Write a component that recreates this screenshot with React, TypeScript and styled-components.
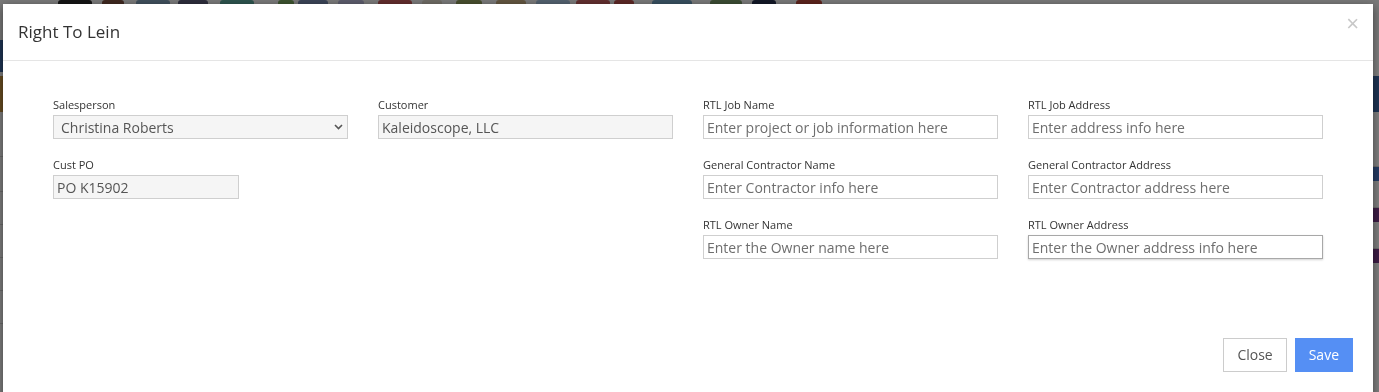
import React from 'react';
import styled, { createGlobalStyle } from 'styled-components';

const GlobalStyle = createGlobalStyle`
  html, body {
    margin: 0;
    padding: 0;
    height: 100%;
    overflow: hidden;
    font-family: "Open Sans", "Liberation Sans", sans-serif;
  }
`;

/* ---------- page that sits under the dialog ---------- */

const Page = styled.div`
  height: 100vh;
  background: #fff;
  display: flex;
  flex-direction: column;
`;

const ThumbStrip = styled.div`
  display: flex;
  align-items: flex-start;
  height: 40px;
  padding-left: 58px;
  background: #f2f2f2;
`;

const Thumb = styled.div<{ $w: number; $c: string; $gap: number }>`
  width: ${(p) => p.$w}px;
  height: 36px;
  margin-left: ${(p) => p.$gap}px;
  background: ${(p) => p.$c};
  border-radius: 3px;
`;

const Board = styled.div`
  flex: 1;
  display: flex;
  justify-content: space-between;
`;

const Rail = styled.div<{ $top: number }>`
  width: 40px;
  display: flex;
  flex-direction: column;
  padding-top: ${(p) => p.$top}px;
`;

const RailBlock = styled.div<{ $h: number; $c: string }>`
  height: ${(p) => p.$h}px;
  background: ${(p) => p.$c};
  margin-bottom: 4px;
`;

const RailRow = styled.div<{ $h: number }>`
  height: ${(p) => p.$h}px;
  border-bottom: 1px solid #d8d8d8;
`;

/* ---------- dialog ---------- */

const Backdrop = styled.div`
  position: fixed;
  inset: 0;
  background: rgba(0, 0, 0, 0.5);
  padding: 4px 0 0 3px;
`;

const Dialog = styled.div`
  width: 1370px;
  height: 420px;
  background: #fff;
  box-shadow: 0 3px 9px rgba(0, 0, 0, 0.5);
  display: flex;
  flex-direction: column;
`;

const Header = styled.div`
  display: flex;
  align-items: center;
  justify-content: space-between;
  height: 56px;
  padding: 0 14px 0 15px;
  border-bottom: 1px solid #e5e5e5;
`;

const Title = styled.h4`
  margin: 0;
  font: 400 17px/20px "Open Sans", "Liberation Sans", sans-serif;
  color: #333;
`;

const CloseX = styled.button`
  border: 0;
  background: none;
  padding: 0 0 16px 0;
  font: 400 22px/1 "Liberation Sans", sans-serif;
  color: #c8c8c8;
  cursor: pointer;
`;

const Body = styled.div`
  padding: 36px 50px 0;
  flex: 1;
`;

const FieldGrid = styled.div`
  display: grid;
  grid-template-columns: repeat(4, 295px);
  column-gap: 30px;
  row-gap: 18px;
`;

const Field = styled.div`
  display: flex;
  flex-direction: column;
`;

const Label = styled.label`
  font: 400 11px/15px "Open Sans", "Liberation Sans", sans-serif;
  color: #333;
  margin-bottom: 3px;
`;

const Input = styled.input<{ $w?: number; $focus?: boolean }>`
  box-sizing: border-box;
  width: ${(p) => (p.$w ? `${p.$w}px` : '100%')};
  height: 24px;
  padding: 0 3px;
  font: 400 14px "Open Sans", "Liberation Sans", sans-serif;
  color: #555;
  background: #fff;
  border: 1px solid ${(p) => (p.$focus ? '#a8a8a8' : '#cfcfcf')};
  box-shadow: ${(p) => (p.$focus ? '0 1px 2px rgba(0,0,0,0.18)' : 'none')};
  border-radius: 0;
  outline: none;

  &::placeholder {
    color: #6e6e6e;
    opacity: 1;
  }

  &[readonly] {
    background: #f5f5f5;
  }
`;

const SelectWrap = styled.div`
  position: relative;
`;

const Select = styled.select`
  box-sizing: border-box;
  width: 100%;
  height: 24px;
  padding: 0 0 0 7px;
  font: 400 14px "Open Sans", "Liberation Sans", sans-serif;
  color: #555;
  background: #f5f5f5;
  border: 1px solid #cfcfcf;
  border-radius: 0;
  appearance: none;
  outline: none;
`;

const Chevron = styled.svg`
  position: absolute;
  right: 5px;
  top: 9px;
  pointer-events: none;
`;

const Footer = styled.div`
  display: flex;
  justify-content: flex-end;
  gap: 8px;
  padding: 0 20px 52px;
`;

const Button = styled.button<{ $primary?: boolean }>`
  height: 34px;
  padding: 0 13px;
  font: 400 14px/20px "Open Sans", "Liberation Sans", sans-serif;
  border: 1px solid ${(p) => (p.$primary ? '#558ff4' : '#cccccc')};
  background: ${(p) => (p.$primary ? '#558ff4' : '#fff')};
  color: ${(p) => (p.$primary ? '#fff' : '#555')};
  border-radius: 0;
  cursor: pointer;
`;

const thumbs = [
  { w: 34, c: '#2a2a2a', gap: 0 },
  { w: 22, c: '#7d5040', gap: 10 },
  { w: 34, c: '#7f9fb8', gap: 12 },
  { w: 30, c: '#5a5a78', gap: 8 },
  { w: 34, c: '#5aa79c', gap: 12 },
  { w: 16, c: '#79a65e', gap: 24 },
  { w: 30, c: '#7688ad', gap: 4 },
  { w: 26, c: '#b8b8d8', gap: 10 },
  { w: 34, c: '#c45a5a', gap: 14 },
  { w: 20, c: '#dcd6c8', gap: 10 },
  { w: 26, c: '#8f9d5c', gap: 14 },
  { w: 30, c: '#c4aa80', gap: 14 },
  { w: 34, c: '#a6c2de', gap: 10 },
  { w: 34, c: '#c45e5e', gap: 6 },
  { w: 20, c: '#b8504c', gap: 4 },
  { w: 40, c: '#6f9ebe', gap: 18 },
  { w: 32, c: '#789868', gap: 18 },
  { w: 24, c: '#26304e', gap: 10 },
  { w: 26, c: '#b8483a', gap: 20 },
];

const ChevronIcon = () => (
  <Chevron width="9" height="6" viewBox="0 0 9 6">
    <path d="M1 1l3.5 3.5L8 1" fill="none" stroke="#555" strokeWidth="1.6" />
  </Chevron>
);

const App: React.FC = () => {
  return (
    <>
      <GlobalStyle />
      <Page>
        <ThumbStrip>
          {thumbs.map((t, i) => (
            <Thumb key={i} $w={t.w} $c={t.c} $gap={t.gap} />
          ))}
        </ThumbStrip>
        <Board>
          <Rail $top={0}>
            <RailBlock $h={32} $c="#3d68a8" />
            <RailBlock $h={36} $c="#d09a44" />
            <RailRow $h={40} />
            <RailRow $h={34} />
            <RailRow $h={32} />
            <RailRow $h={32} />
            <RailRow $h={32} />
            <RailRow $h={32} />
          </Rail>
          <Rail $top={36}>
            <RailBlock $h={36} $c="#3d68a8" />
            <RailRow $h={50} />
            <RailBlock $h={14} $c="#4a78c8" />
            <RailRow $h={22} />
            <RailBlock $h={14} $c="#7b3a8c" />
            <RailRow $h={22} />
            <RailBlock $h={14} $c="#7b3a8c" />
          </Rail>
        </Board>
      </Page>

      <Backdrop>
        <Dialog>
          <Header>
            <Title>Right To Lein</Title>
            <CloseX aria-label="Close">×</CloseX>
          </Header>
          <Body>
            <FieldGrid>
              <Field>
                <Label>Salesperson</Label>
                <SelectWrap>
                  <Select defaultValue="cr">
                    <option value="cr">Christina Roberts</option>
                  </Select>
                  <ChevronIcon />
                </SelectWrap>
              </Field>
              <Field>
                <Label>Customer</Label>
                <Input readOnly defaultValue="Kaleidoscope, LLC" />
              </Field>
              <Field>
                <Label>RTL Job Name</Label>
                <Input placeholder="Enter project or job information here" />
              </Field>
              <Field>
                <Label>RTL Job Address</Label>
                <Input placeholder="Enter address info here" />
              </Field>

              <Field>
                <Label>Cust PO</Label>
                <Input readOnly $w={186} defaultValue="PO K15902" />
              </Field>
              <div />
              <Field>
                <Label>General Contractor Name</Label>
                <Input placeholder="Enter Contractor info here" />
              </Field>
              <Field>
                <Label>General Contractor Address</Label>
                <Input placeholder="Enter Contractor address here" />
              </Field>

              <div />
              <div />
              <Field>
                <Label>RTL Owner Name</Label>
                <Input placeholder="Enter the Owner name here" />
              </Field>
              <Field>
                <Label>RTL Owner Address</Label>
                <Input $focus placeholder="Enter the Owner address info here" />
              </Field>
            </FieldGrid>
          </Body>
          <Footer>
            <Button>Close</Button>
            <Button $primary>Save</Button>
          </Footer>
        </Dialog>
      </Backdrop>
    </>
  );
};

export default App;
